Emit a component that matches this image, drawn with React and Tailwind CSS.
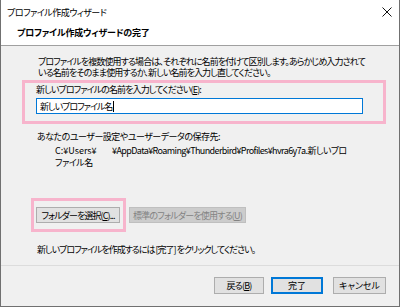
import React from "react";

function U({ children }) {
  return <span className="underline underline-offset-[1px]">{children}</span>;
}

export default function App() {
  return (
    <div className="w-[400px] h-[307px] flex flex-col bg-[#f0f0f0] border-x border-b border-[#707070] text-black text-[9px] leading-[11px] tracking-[-0.9px] whitespace-nowrap font-['Noto_Sans_CJK_JP','Noto_Sans',sans-serif] [font-feature-settings:'palt'] overflow-hidden">
      <div className="bg-white h-[46px] border-b border-[#a0a0a0] flex flex-col shrink-0">
        <div className="h-[24px] flex items-center justify-between pl-[6px] pr-[6px]">
          <span className="tracking-[-0.5px]">プロファイル作成ウィザード</span>
          <svg width="10" height="10" viewBox="0 0 10 10" className="mr-[1px]">
            <path d="M0.5 0.5 L9.5 9.5 M9.5 0.5 L0.5 9.5" stroke="#111" strokeWidth="1" fill="none" />
          </svg>
        </div>
        <div className="pl-[16px] mt-[3px] font-bold tracking-[-0.2px]">プロファイル作成ウィザードの完了</div>
      </div>
      <div className="flex flex-col flex-1">
        <div className="pl-[37px] mt-[10px]">
          プロファイルを複数使用する場合は、それぞれに名前を付けて区別します。あらかじめ入力されて
          <br />
          いる名前をそのまま使用するか、新しい名前を入力し直してください。
        </div>
        <div className="ml-[21px] mt-[2px] w-[364px] h-[44px] border-[3px] border-[#f7b4cc] pl-[11px] pr-[20px] pt-[1px] flex flex-col">
          <div>
            新しいプロファイルの名前を入力してください(<U>E</U>):
          </div>
          <div className="mt-[3px] h-[16px] border border-[#0078d7] bg-white flex items-center pl-[3px]">
            <span className="tracking-[-1px]">新しいプロファイル名</span>
            <span className="w-px h-[11px] bg-black ml-[1px]" />
          </div>
        </div>
        <div className="pl-[36px] mt-[7px] tracking-[-0.5px]">あなたのユーザー設定やユーザーデータの保存先:</div>
        <div className="pl-[54px] mt-[3px] leading-[12px]">
          <div className="flex">
            <span className="w-[57px] tracking-normal">C:¥Users¥</span>
            <span className="tracking-[-0.6px]">¥AppData¥Roaming¥Thunderbird¥Profiles¥hvra6y7a.新しいプロ</span>
          </div>
          <div className="tracking-[-0.5px]">ファイル名</div>
        </div>
        <div className="flex items-start mt-[29px] shrink-0">
          <div className="ml-[30px] w-[95px] h-[34px] border-[3px] border-[#f7b4cc] pl-[2px] pt-[6px]">
            <div className="w-[84px] h-[16px] bg-[#e1e1e1] border border-[#adadad] flex items-center justify-center">
              フォルダーを選択(<U>C</U>)...
            </div>
          </div>
          <div className="ml-[3px] mt-[9px] w-[117px] h-[16px] bg-[#cccccc] border border-[#bfbfbf] text-[#838383] flex items-center justify-center tracking-[-0.8px]">
            標準のフォルダーを使用する(<U>U</U>)
          </div>
        </div>
        <div className="pl-[36px] mt-[12px] tracking-[-1px]">新しいプロファイルを作成するには [完了] をクリックしてください。</div>
        <div className="mt-[10px] h-px bg-[#dcdcdc] shrink-0" />
        <div className="flex items-start pt-[11px] pl-[213px]">
          <div className="w-[50px] h-[17px] bg-[#e1e1e1] border border-[#adadad] flex items-center justify-center tracking-[-0.8px]">
            戻る(<U>B</U>)
          </div>
          <div className="ml-[7px] w-[52px] h-[17px] bg-[#e1e1e1] border-2 border-[#0078d7] flex items-center justify-center tracking-normal">
            完了
          </div>
          <div className="ml-[10px] w-[53px] h-[17px] bg-[#e1e1e1] border border-[#adadad] flex items-center justify-center tracking-normal">
            キャンセル
          </div>
        </div>
      </div>
    </div>
  );
}
